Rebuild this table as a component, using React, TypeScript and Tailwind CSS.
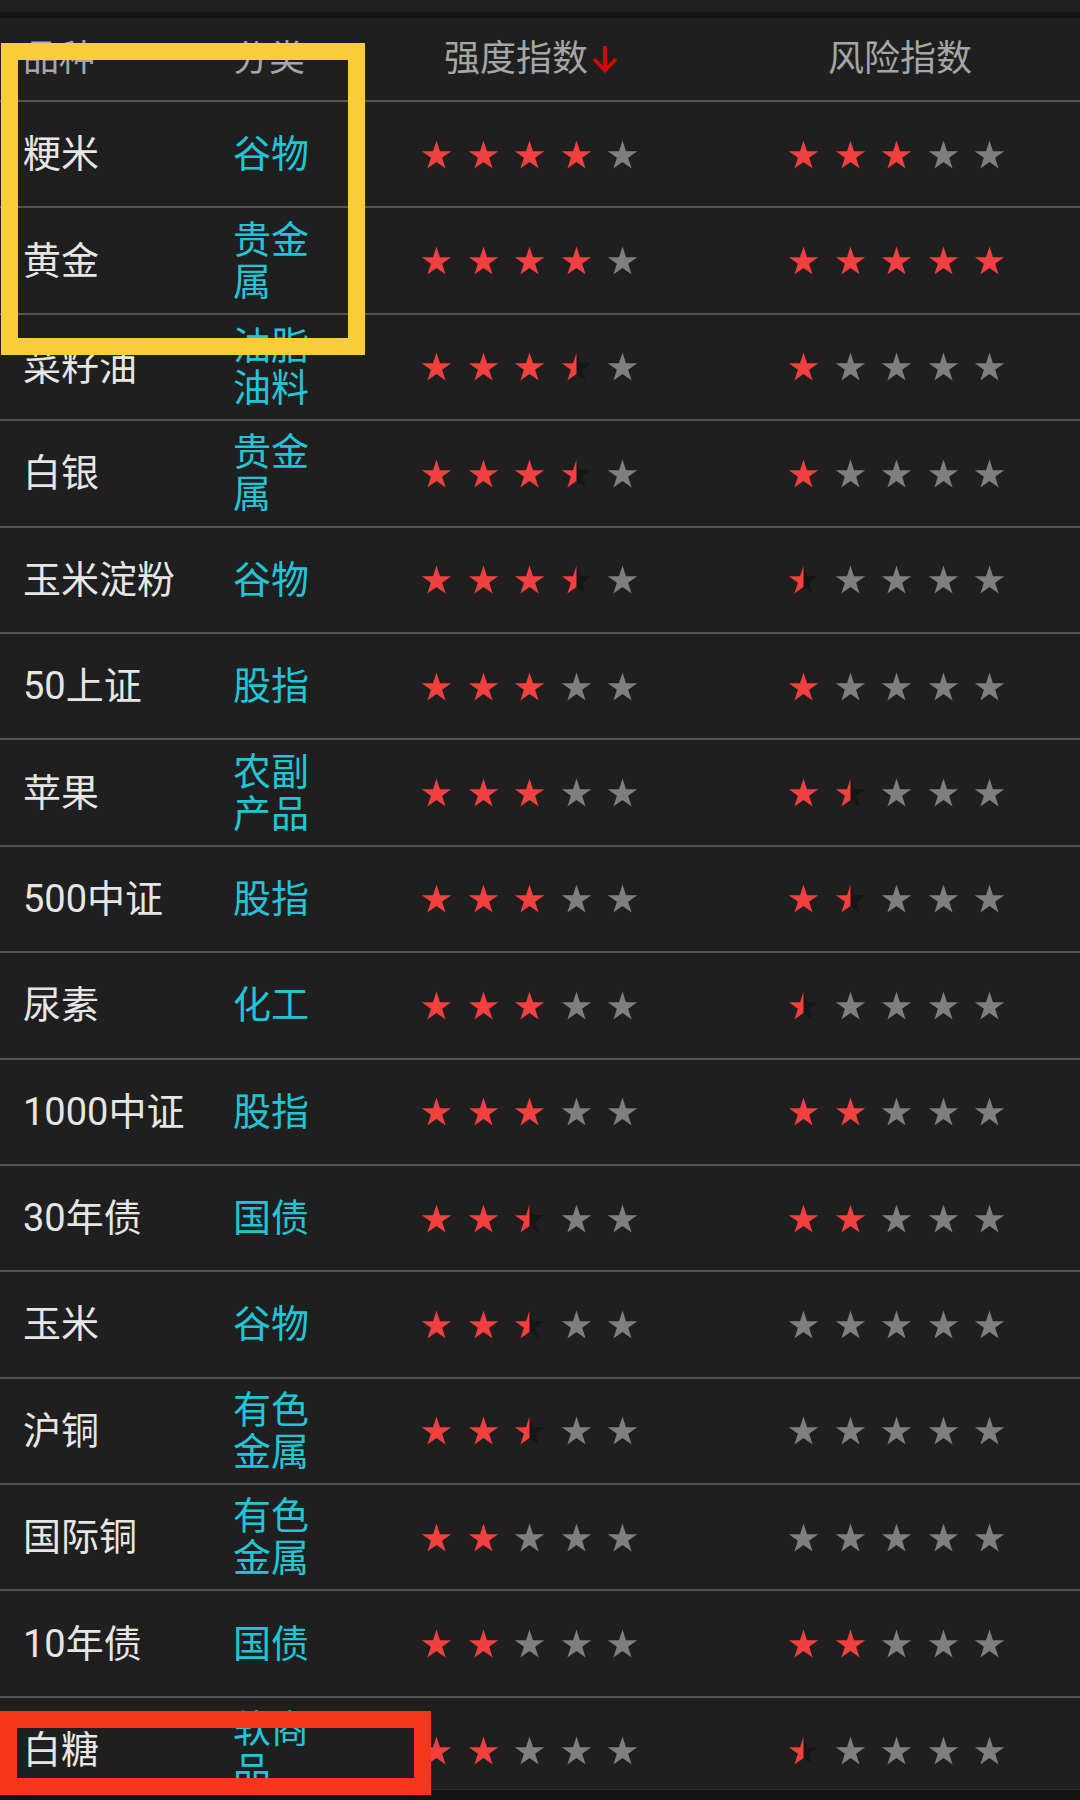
import React from "react";

type Row = { name: string; cat: string; s: number; r: number };

const rows: Row[] = [
  { name: "粳米", cat: "谷物", s: 4, r: 3 },
  { name: "黄金", cat: "贵金属", s: 4, r: 5 },
  { name: "菜籽油", cat: "油脂油料", s: 3.5, r: 1 },
  { name: "白银", cat: "贵金属", s: 3.5, r: 1 },
  { name: "玉米淀粉", cat: "谷物", s: 3.5, r: 0.5 },
  { name: "50上证", cat: "股指", s: 3, r: 1 },
  { name: "苹果", cat: "农副产品", s: 3, r: 1.5 },
  { name: "500中证", cat: "股指", s: 3, r: 1.5 },
  { name: "尿素", cat: "化工", s: 3, r: 0.5 },
  { name: "1000中证", cat: "股指", s: 3, r: 2 },
  { name: "30年债", cat: "国债", s: 2.5, r: 2 },
  { name: "玉米", cat: "谷物", s: 2.5, r: 0 },
  { name: "沪铜", cat: "有色金属", s: 2.5, r: 0 },
  { name: "国际铜", cat: "有色金属", s: 2, r: 0 },
  { name: "10年债", cat: "国债", s: 2, r: 2 },
  { name: "白糖", cat: "软商品", s: 2, r: 0.5 },
];

const FULL =
  "50,4.78 61.23,39.33 97.55,39.33 68.16,60.68 79.39,95.23 50,73.88 20.61,95.23 31.84,60.68 2.45,39.33 38.77,39.33";
const LEFT = "50,4.78 50,73.88 20.61,95.23 31.84,60.68 2.45,39.33 38.77,39.33";

function Star({ kind }: { kind: "full" | "half" | "empty" }) {
  return (
    <svg width="31" height="31" viewBox="0 0 100 100" className="shrink-0">
      {kind === "full" && <polygon points={FULL} fill="#f23f3f" />}
      {kind === "empty" && <polygon points={FULL} fill="#7f7f7f" />}
      {kind === "half" && (
        <>
          <polygon points={FULL} fill="#161616" />
          <polygon points={LEFT} fill="#f23f3f" />
        </>
      )}
    </svg>
  );
}

function Stars({ v }: { v: number }) {
  const items = [0, 1, 2, 3, 4].map((i) =>
    v >= i + 1 ? "full" : v >= i + 0.5 ? "half" : "empty"
  ) as ("full" | "half" | "empty")[];
  return (
    <div className="flex items-center gap-[15.6px]">
      {items.map((k, i) => (
        <Star key={i} kind={k} />
      ))}
    </div>
  );
}

export default function App() {
  return (
    <div className="relative w-[1080px] h-[1800px] overflow-hidden bg-[#1f1f1f] flex flex-col font-['Roboto','Noto_Sans_CJK_SC',sans-serif]">
      <div className="h-[12px] shrink-0 bg-[#202020]" />
      <div className="h-[6px] shrink-0 bg-[#151515]" />
      <div className="flex-1 overflow-hidden">
        {/* header */}
        <div className="h-[84px] flex items-center border-b-2 border-[#555555] text-[36px] leading-none text-[#a6a6a6]">
          <div className="w-[233px] pl-[23px] shrink-0">品种</div>
          <div className="w-[188px] shrink-0">分类</div>
          <div className="w-[367px] shrink-0 pl-[23px] flex items-center">
            <span>强度指数</span>
            <svg width="26" height="28" viewBox="0 0 26 28" className="ml-[4px]">
              <path
                d="M13 1 V25 M2 14 L13 25.5 L24 14"
                stroke="#d00a0a"
                strokeWidth="3.8"
                fill="none"
                strokeLinecap="butt"
                strokeLinejoin="miter"
              />
            </svg>
          </div>
          <div className="pl-[40px]">风险指数</div>
        </div>
        {rows.map((row, i) => (
          <div
            key={i}
            className="h-[106.4px] flex items-center border-b-2 border-[#555555]"
          >
            <div className="w-[233px] pl-[23px] shrink-0 text-[38px] leading-[42px] text-[#e6e6e6]">
              {row.name}
            </div>
            <div className="w-[188px] shrink-0">
              <div className="w-[82px] text-[38px] leading-[42px] text-[#22c5d8]">
                {row.cat}
              </div>
            </div>
            <div className="w-[367px] shrink-0">
              <Stars v={row.s} />
            </div>
            <div>
              <Stars v={row.r} />
            </div>
          </div>
        ))}
      </div>
      <div className="h-px shrink-0 bg-[#2b2b2b]" />
      <div className="h-[10px] shrink-0 bg-[#141414]" />

      {/* annotation overlays */}
      <div className="absolute left-[1px] top-[43px] w-[364px] h-[312px] border-[17px] border-[#f9cc3a]" />
      <div className="absolute left-0 top-[1711px] w-[431px] h-[84px] border-[17px] border-[#f4361a]" />
    </div>
  );
}
